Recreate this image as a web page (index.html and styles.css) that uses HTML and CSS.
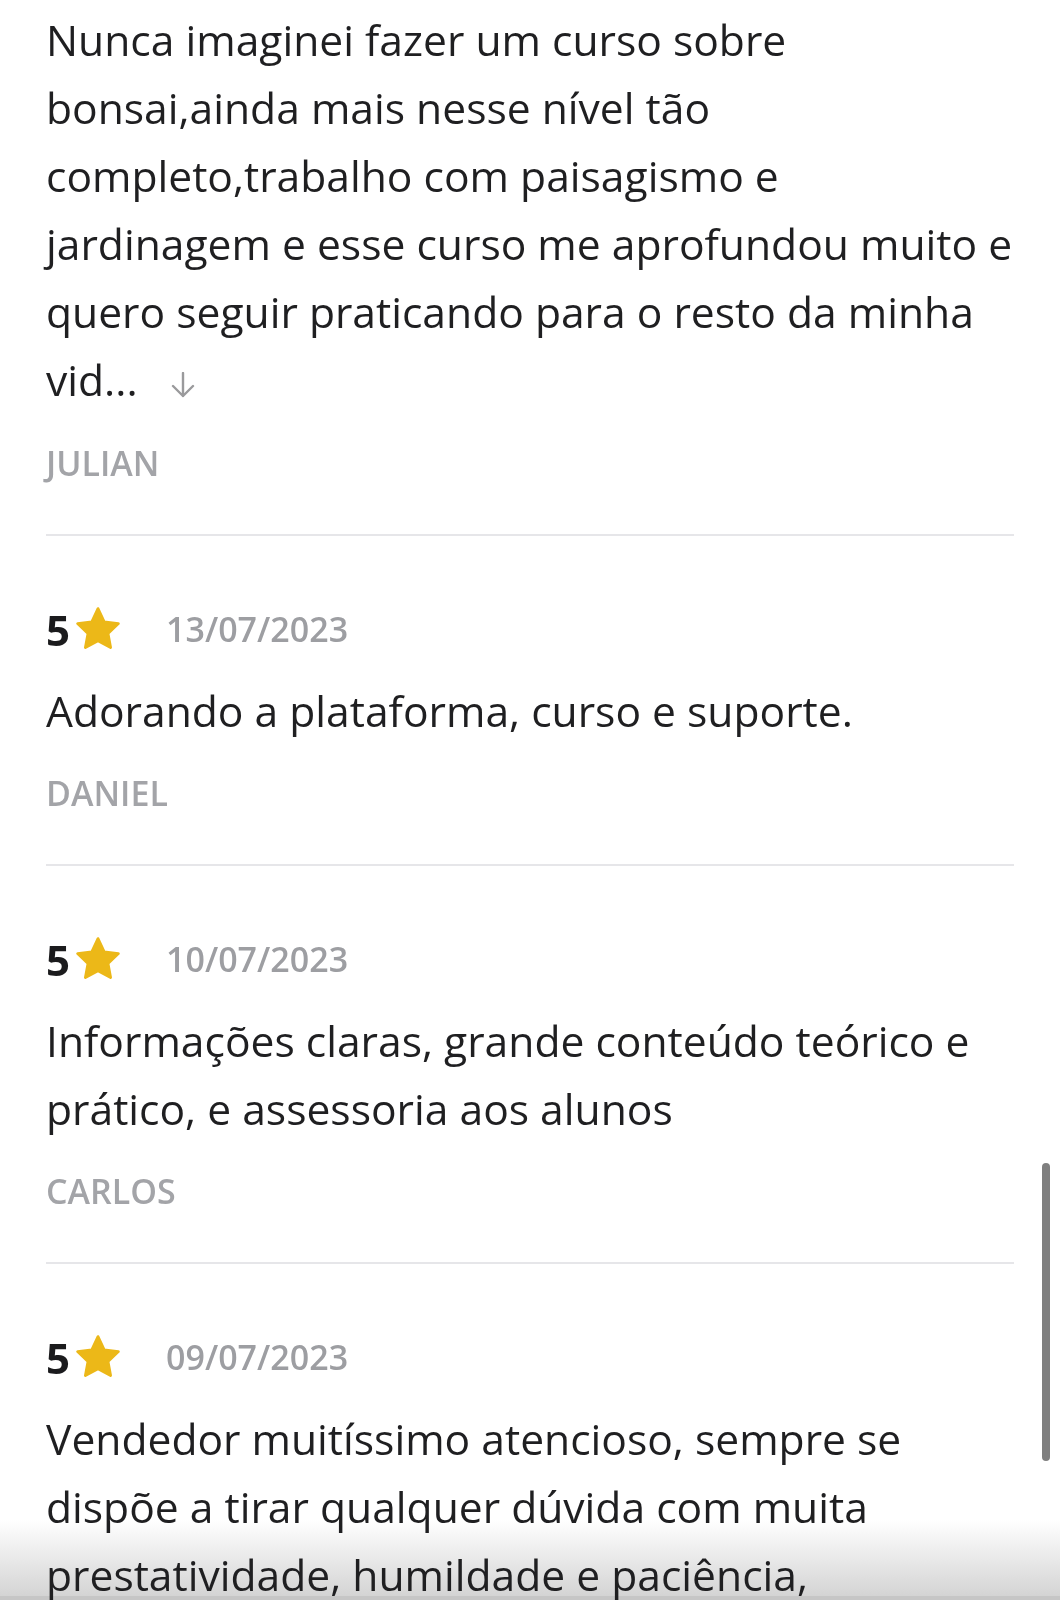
FILE: index.html
```html
<!DOCTYPE html>
<html lang="pt-BR">
<head>
  <meta charset="UTF-8" />
  <meta name="viewport" content="width=device-width, initial-scale=1.0"/>
  <title>Avaliações</title>
  <link rel="stylesheet" href="styles.css">
</head>
<body>
  <div class="bottom-fade"></div>

  <div class="reviews">
    <!-- primeira avaliação (cortada no topo) -->
    <div class="review review-first">
      <p class="review-text">Nunca imaginei fazer um curso sobre<br>bonsai,ainda mais nesse nível tão<br>completo,trabalho com paisagismo e<br>jardinagem e esse curso me aprofundou muito e<br>quero seguir praticando para o resto da minha<br>vid... <span class="more">
        <svg width="24" height="26" viewBox="0 0 24 26"><path d="M12 1 V24 M2 14 L12 24 L22 14" fill="none" stroke="#9a9a9c" stroke-width="2.4" stroke-linecap="round" stroke-linejoin="round"/></svg>
      </span></p>
      <div class="review-author">JULIAN</div>
    </div>

    <div class="review">
      <div class="review-rating">
        <span class="score">5</span>
        <svg class="star" viewBox="0 0 24 24"><path d="M12 1.8l3.1 6.6 7.1.9-5.2 4.9 1.3 7.1L12 17.9l-6.3 3.4 1.3-7.1-5.2-4.9 7.1-.9z" fill="#ecb818" stroke="#ecb818" stroke-width="1.4" stroke-linejoin="round"/></svg>
        <span class="date">13/07/2023</span>
      </div>
      <p class="review-text">Adorando a plataforma, curso e suporte.</p>
      <div class="review-author">DANIEL</div>
    </div>

    <div class="review">
      <div class="review-rating">
        <span class="score">5</span>
        <svg class="star" viewBox="0 0 24 24"><path d="M12 1.8l3.1 6.6 7.1.9-5.2 4.9 1.3 7.1L12 17.9l-6.3 3.4 1.3-7.1-5.2-4.9 7.1-.9z" fill="#ecb818" stroke="#ecb818" stroke-width="1.4" stroke-linejoin="round"/></svg>
        <span class="date">10/07/2023</span>
      </div>
      <p class="review-text">Informações claras, grande conteúdo teórico e<br>prático, e assessoria aos alunos</p>
      <div class="review-author">CARLOS</div>
    </div>

    <div class="review review-last">
      <div class="review-rating">
        <span class="score">5</span>
        <svg class="star" viewBox="0 0 24 24"><path d="M12 1.8l3.1 6.6 7.1.9-5.2 4.9 1.3 7.1L12 17.9l-6.3 3.4 1.3-7.1-5.2-4.9 7.1-.9z" fill="#ecb818" stroke="#ecb818" stroke-width="1.4" stroke-linejoin="round"/></svg>
        <span class="date">09/07/2023</span>
      </div>
      <p class="review-text">Vendedor muitíssimo atencioso, sempre se<br>dispõe a tirar qualquer dúvida com muita<br>prestatividade, humildade e paciência,</p>
    </div>
  </div>

  <div class="scrollbar"></div>
</body>
</html>
```

FILE: styles.css
```css
body {
  margin: 0;
  background: #ffffff;
  font-family: "Open Sans", "Noto Sans", sans-serif;
  color: #1f1f21;
  overflow: hidden;
}
.reviews {
  width: 968px;
  margin-left: 46px;
}
.review {
  padding: 63px 0 46px;
  border-bottom: 2px solid #e6e6e9;
}
.review-first {
  padding-top: 6px;
}
.review-last {
  border-bottom: none;
  padding-bottom: 0;
}
.review-rating {
  display: flex;
  align-items: center;
  height: 60px;
  margin-bottom: 18px;
}
.score {
  font-size: 42px;
  font-weight: 700;
  color: #1b1b1d;
}
.star {
  width: 48px;
  height: 48px;
  margin-left: 4px;
}
.date {
  margin-left: 44px;
  font-size: 34px;
  font-weight: 600;
  color: #9d9ea2;
}
.review-text {
  margin: 0;
  font-size: 42.6px;
  line-height: 67.9px;
  white-space: nowrap;
}
.more {
  display: inline-block;
  margin-left: 22px;
  vertical-align: -2px;
}
.review-author {
  margin-top: 23px;
  height: 50px;
  line-height: 50px;
  font-size: 34px;
  font-weight: 600;
  color: #a3a4a8;
}
.scrollbar {
  position: fixed;
  right: 10px;
  top: 1163px;
  width: 8px;
  height: 298px;
  border-radius: 4px;
  background: #7f7f7f;
}
.bottom-fade {
  position: fixed;
  z-index: -1;
  left: 0;
  right: 0;
  bottom: 0;
  height: 76px;
  background: linear-gradient(to bottom, #ffffff, #d4d4d4);
  border-bottom: 4px solid #c6c6c6;
}
```
